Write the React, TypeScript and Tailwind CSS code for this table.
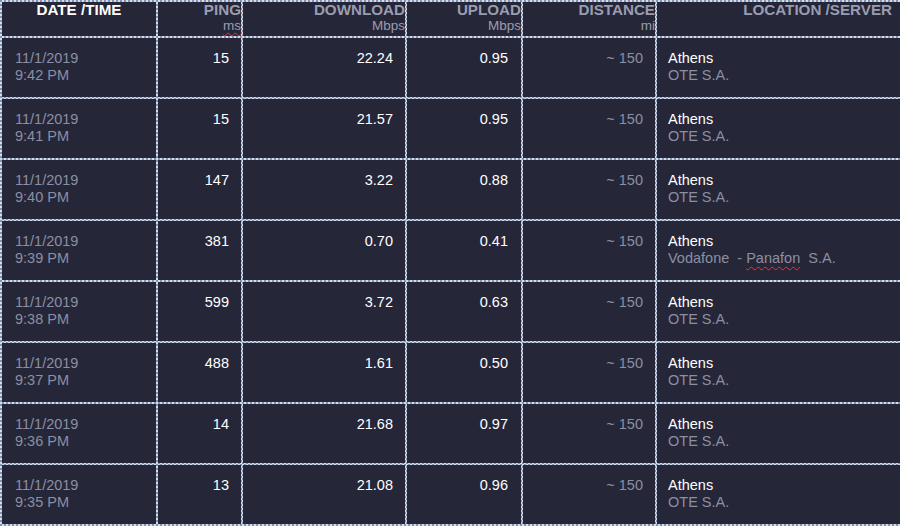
import React from "react";

type Row = { time: string; ping: string; down: string; up: string; server: React.ReactNode };

const rows: Row[] = [
  { time: "9:42 PM", ping: "15", down: "22.24", up: "0.95", server: "OTE S.A." },
  { time: "9:41 PM", ping: "15", down: "21.57", up: "0.95", server: "OTE S.A." },
  { time: "9:40 PM", ping: "147", down: "3.22", up: "0.88", server: "OTE S.A." },
  {
    time: "9:39 PM",
    ping: "381",
    down: "0.70",
    up: "0.41",
    server: (
      <span className="whitespace-pre">
        {"Vodafone  - "}
        <span className="underline decoration-wavy decoration-[#e03a3a] decoration-1 underline-offset-[3px]">Panafon</span>
        {"  S.A."}
      </span>
    ),
  },
  { time: "9:38 PM", ping: "599", down: "3.72", up: "0.63", server: "OTE S.A." },
  { time: "9:37 PM", ping: "488", down: "1.61", up: "0.50", server: "OTE S.A." },
  { time: "9:36 PM", ping: "14", down: "21.68", up: "0.97", server: "OTE S.A." },
  { time: "9:35 PM", ping: "13", down: "21.08", up: "0.96", server: "OTE S.A." },
];

const cell = "bg-[#262639]";

function Head({ title, unit, wavy }: { title: string; unit?: string; wavy?: boolean }) {
  return (
    <div className={`${cell} flex flex-col items-end text-[#9a9db0]`}>
      <div className="text-[15.2px] font-bold leading-[16px]">{title}</div>
      {unit && (
        <div
          className={`text-[13.5px] leading-[15px] ${
            wavy ? "underline decoration-wavy decoration-[#e03a3a] decoration-1 underline-offset-[2px]" : ""
          }`}
        >
          {unit}
        </div>
      )}
    </div>
  );
}

export default function App() {
  return (
    <div className="w-[900px] h-[526px] overflow-hidden bg-[#262639] font-['Liberation_Sans',Arial,sans-serif]">
      <div className="grid grid-cols-[154px_83px_162px_114px_132px_1fr] grid-rows-[34px_repeat(8,59px)] gap-[2px] pt-[2px] pl-[2px] pb-[2px] bg-[image:repeating-conic-gradient(#d3ddee_0_25%,#8592ad_0_50%)] bg-[length:4px_4px]">
        <div className={`${cell} text-center text-white text-[15.2px] font-bold leading-[16px]`}>DATE /TIME</div>
        <Head title="PING" unit="ms" wavy />
        <Head title="DOWNLOAD" unit="Mbps" />
        <Head title="UPLOAD" unit="Mbps" />
        <Head title="DISTANCE" unit="mi" />
        <div className={`${cell} text-right pr-[8px] text-[#9a9db0] text-[15.2px] font-bold leading-[16px]`}>
          LOCATION /SERVER
        </div>

        {rows.map((r, i) => (
          <React.Fragment key={i}>
            <div className={`${cell} pl-[13px] pt-[12px] text-[14.5px] leading-[17px] text-[#8b8fa2]`}>
              <div>11/1/2019</div>
              <div>{r.time}</div>
            </div>
            <div className={`${cell} pr-[12px] pt-[12px] text-right text-[14.5px] leading-[17px] text-white`}>{r.ping}</div>
            <div className={`${cell} pr-[12px] pt-[12px] text-right text-[14.5px] leading-[17px] text-white`}>{r.down}</div>
            <div className={`${cell} pr-[13px] pt-[12px] text-right text-[14.5px] leading-[17px] text-white`}>{r.up}</div>
            <div className={`${cell} pr-[12px] pt-[12px] text-right text-[14.5px] leading-[17px] text-[#8b8fa2]`}>~ 150</div>
            <div className={`${cell} pl-[11px] pt-[12px] text-[14.5px] leading-[17px]`}>
              <div className="text-white">Athens</div>
              <div className="text-[#8b8fa2]">{r.server}</div>
            </div>
          </React.Fragment>
        ))}
      </div>
    </div>
  );
}
